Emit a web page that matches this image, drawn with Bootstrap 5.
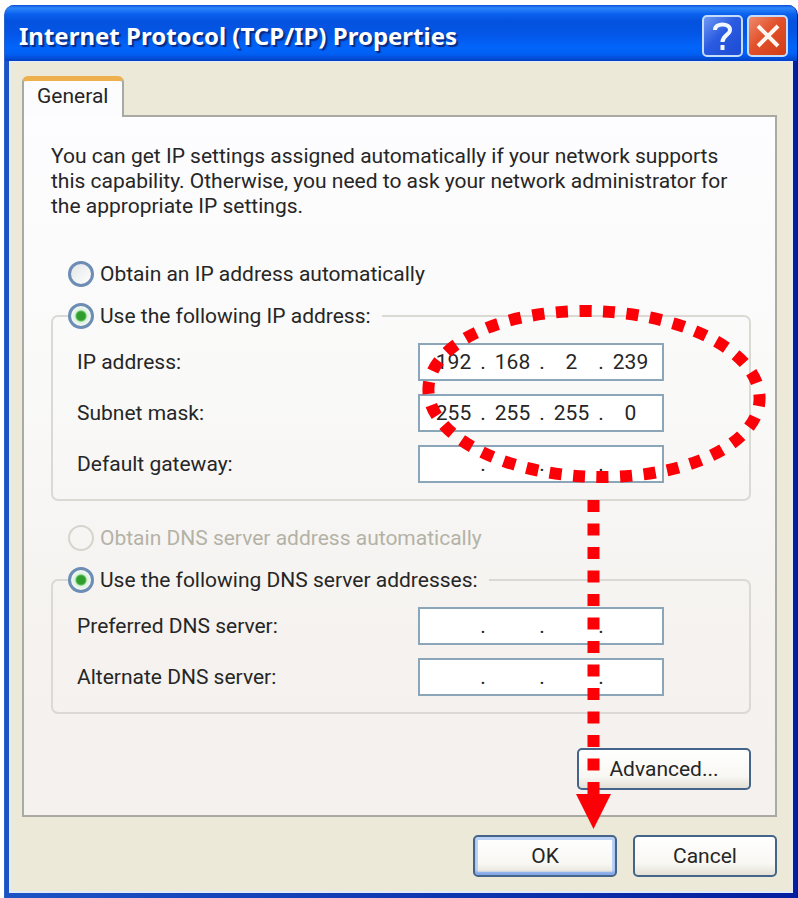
<!DOCTYPE html>
<html lang="en">
<head>
<meta charset="utf-8">
<meta name="viewport" content="width=device-width, initial-scale=1">
<title>Internet Protocol (TCP/IP) Properties</title>
<link href="https://cdn.jsdelivr.net/npm/bootstrap@5.3.0/dist/css/bootstrap.min.css" rel="stylesheet">
<style>
  body { background: #fff; color: #262626; font: 21px/25px Roboto, "Liberation Sans", sans-serif; padding: 5px 0 0 4px; }
  .xp-window { background: linear-gradient(90deg, #1c52c4 0 20px, #0420a0 calc(100% - 20px)); border: solid; border-width: 0 1px; border-color: #001a90 #001a90 #001a90 #2a62cc; border-radius: 10px 10px 0 0; overflow: hidden; padding: 0 4px 6px; }
  .xp-title { height: 56px; margin: 0 -4px; padding: 6px 9px 0 14px; background: linear-gradient(#0a50d8 0, #2f86fb 3px, #0a62ee 9px, #0452de 16px, #0455e6 28px, #0264fa 42px, #0160f4 49px, #0340c4 56px); }
  .xp-title h1 { font: 700 24px/30px "Noto Sans", sans-serif; color: #fff; text-shadow: 2px 2px 1px #0a2a80; }
  .xp-cap { width: 41px; height: 42px; padding: 0; border: 2px solid #c5dcfb; border-radius: 5px; display: block; }
  .xp-help { background: linear-gradient(135deg, #6f9af4, #2b5be0 45%, #1c4bd4); }
  .xp-close { background: linear-gradient(135deg, #ee8a6c, #e2512c 45%, #d03c14); }
  .xp-body { background: #ece9d8; border: 2px solid #e3ecf6; border-top-width: 1px; padding: 14px 14px 14px 11px; }
  .xp-tabs { border: 0; margin-bottom: -2px; }
  .xp-tabs .nav-link { position: relative; z-index: 1; margin: 0; padding: 3px 14px 8px 13px; color: #262626; line-height: 25px; background: #fcfcfe; border: 2px solid #a3aaa8; border-bottom: 0; border-top: 5px solid #eeb04c; border-radius: 6px 6px 0 0; }
  .xp-tabs .nav-link:hover, .xp-tabs .nav-link.active { color: #262626; background: #fcfcfe; border-color: #eeb04c #a3aaa8 #fcfcfe; }
  .xp-panel { background: linear-gradient(#fdfdff, #f9f9f8 40%, #f5f2ef 75%, #f4f1ee); border: 2px solid #a9aaa2; padding: 27px 24px 25px 27px; }
  .xp-intro { margin-bottom: 40px; }
  .xp-opt { display: flex; align-items: center; gap: 6px; min-height: 30px; line-height: 30px; }
  .xp-opt.solo { margin: 0 0 12px 17px; }
  .xp-opt input { appearance: none; width: 26px; height: 26px; margin: 0; border: 3px solid #6d8db4; border-radius: 50%; background: linear-gradient(135deg, #e3e5e6, #fff); }
  .xp-opt input:checked { background: radial-gradient(circle, #2f9e2f 0 4px, #5fbf5a 5px, #d8f0d8 6px, #f0f7f4 9px); }
  .xp-opt input:disabled { border: 2px solid #d6d4cc; background: transparent; }
  .xp-opt input:disabled + label { color: #b4b2a6; opacity: 1; }
  .xp-group { border: 2px solid #dad9d4; border-radius: 7px; padding: 12px 85px 16px 15px; margin-bottom: 22px; }
  .xp-group legend { float: none; width: auto; font-size: inherit; margin: 0; padding: 0 11px 0 0; }
  .xp-rows { display: grid; gap: 13px; padding-left: 9px; }
  .xp-ip { width: 246px; height: 38px; background: #fff; border: 2px solid #8ca6b9; padding: 0 5px 0 7px; }
  .xp-ip input { flex: 1 1 0; min-width: 0; padding: 0; border: 0; background: transparent; text-align: center; color: #262626; outline: 0; }
  .xp-ip span { width: 6px; text-align: center; }
  .xp-adv { margin-top: 34px; }
  .xp-foot { margin-top: 18px; }
  .xp-btn { min-width: 144px; height: 42px; padding: 0 12px; color: #262626; font-size: 21px; line-height: 36px; border: 2px solid #45648a; border-radius: 5px; background: linear-gradient(#fff, #f8f7f3 70%, #e4e0d6); }
  .xp-btn.wide { min-width: 174px; }
  .xp-btn.main { box-shadow: inset 0 -3px 2px #86a8e8, inset 0 0 0 3px #bcd2f6; }
  .xp-mark { position: absolute; top: 295px; right: 22px; pointer-events: none; }
</style>
<script src="https://cdn.jsdelivr.net/npm/bootstrap@5.3.0/dist/js/bootstrap.bundle.min.js"></script>
</head>
<body>
<main class="xp-window position-relative">
  <header class="xp-title d-flex align-items-center">
    <h1 class="m-0 me-auto">Internet Protocol (TCP/IP) Properties</h1>
    <div class="d-flex gap-1">
      <button type="button" class="xp-cap xp-help" aria-label="Help"><svg class="d-block" width="37" height="38" viewBox="0 0 37 38" fill="none" stroke="#f2f6ff" stroke-width="4"><path d="M11 13C11 5.500 26 5.500 26 13C26 18 18.500 18 18.500 25"/><path d="M18.500 28v5"/></svg></button>
      <button type="button" class="xp-cap xp-close" aria-label="Close"><svg class="d-block" width="37" height="38" viewBox="0 0 37 38" fill="none" stroke="#fff6f0" stroke-width="4"><path d="M9 9l20 20M29 9L9 29"/></svg></button>
    </div>
  </header>
  <div class="xp-body">
    <ul class="nav nav-tabs xp-tabs" role="tablist">
      <li class="nav-item" role="presentation"><button type="button" class="nav-link active" role="tab" aria-selected="true" aria-controls="general">General</button></li>
    </ul>
    <section class="xp-panel" id="general" role="tabpanel">
      <p class="xp-intro">You can get IP settings assigned automatically if your network supports this capability. Otherwise, you need to ask your network administrator for the appropriate IP settings.</p>
      <div class="xp-opt solo"><input type="radio" name="ip" id="ipAuto"><label for="ipAuto">Obtain an IP address automatically</label></div>
      <fieldset class="xp-group">
        <legend class="xp-opt"><input type="radio" name="ip" id="ipUse" checked><label for="ipUse">Use the following IP address:</label></legend>
        <div class="xp-rows">
          <div class="d-flex align-items-center justify-content-between"><label for="ip1">IP address:</label>
            <div class="xp-ip d-flex align-items-center"><input id="ip1" value="192"><span>.</span><input aria-label="IP address octet 2" value="168"><span>.</span><input aria-label="IP address octet 3" value="2"><span>.</span><input aria-label="IP address octet 4" value="239"></div></div>
          <div class="d-flex align-items-center justify-content-between"><label for="mask1">Subnet mask:</label>
            <div class="xp-ip d-flex align-items-center"><input id="mask1" value="255"><span>.</span><input aria-label="Subnet mask octet 2" value="255"><span>.</span><input aria-label="Subnet mask octet 3" value="255"><span>.</span><input aria-label="Subnet mask octet 4" value="0"></div></div>
          <div class="d-flex align-items-center justify-content-between"><label for="gw1">Default gateway:</label>
            <div class="xp-ip d-flex align-items-center"><input id="gw1"><span>.</span><input aria-label="Default gateway octet 2"><span>.</span><input aria-label="Default gateway octet 3"><span>.</span><input aria-label="Default gateway octet 4"></div></div>
        </div>
      </fieldset>
      <div class="xp-opt solo"><input type="radio" name="dns" id="dnsAuto" disabled><label for="dnsAuto">Obtain DNS server address automatically</label></div>
      <fieldset class="xp-group mb-0">
        <legend class="xp-opt"><input type="radio" name="dns" id="dnsUse" checked><label for="dnsUse">Use the following DNS server addresses:</label></legend>
        <div class="xp-rows">
          <div class="d-flex align-items-center justify-content-between"><label for="pd1">Preferred DNS server:</label>
            <div class="xp-ip d-flex align-items-center"><input id="pd1"><span>.</span><input aria-label="Preferred DNS octet 2"><span>.</span><input aria-label="Preferred DNS octet 3"><span>.</span><input aria-label="Preferred DNS octet 4"></div></div>
          <div class="d-flex align-items-center justify-content-between"><label for="ad1">Alternate DNS server:</label>
            <div class="xp-ip d-flex align-items-center"><input id="ad1"><span>.</span><input aria-label="Alternate DNS octet 2"><span>.</span><input aria-label="Alternate DNS octet 3"><span>.</span><input aria-label="Alternate DNS octet 4"></div></div>
        </div>
      </fieldset>
      <div class="d-flex justify-content-end xp-adv"><button type="button" class="xp-btn wide">Advanced...</button></div>
    </section>
    <footer class="d-flex justify-content-end gap-3 xp-foot"><button type="button" class="xp-btn main">OK</button><button type="button" class="xp-btn">Cancel</button></footer>
  </div>
  <svg class="xp-mark" width="360" height="535" viewBox="415 300 360 535" fill="none" stroke="#fb0007" stroke-width="12" aria-hidden="true">
    <path pathLength="799" stroke-dasharray="12 11.500" d="M603 311.500A164 82 2 0 1 585 476.500A164 82 2 0 1 603 311.500"/>
    <path stroke-dasharray="12 11.500" d="M593.500 500V794"/>
    <path d="M576 794h35l-17.500 35z" fill="#fb0007" stroke="none"/>
  </svg>
</main>
</body>
</html>
